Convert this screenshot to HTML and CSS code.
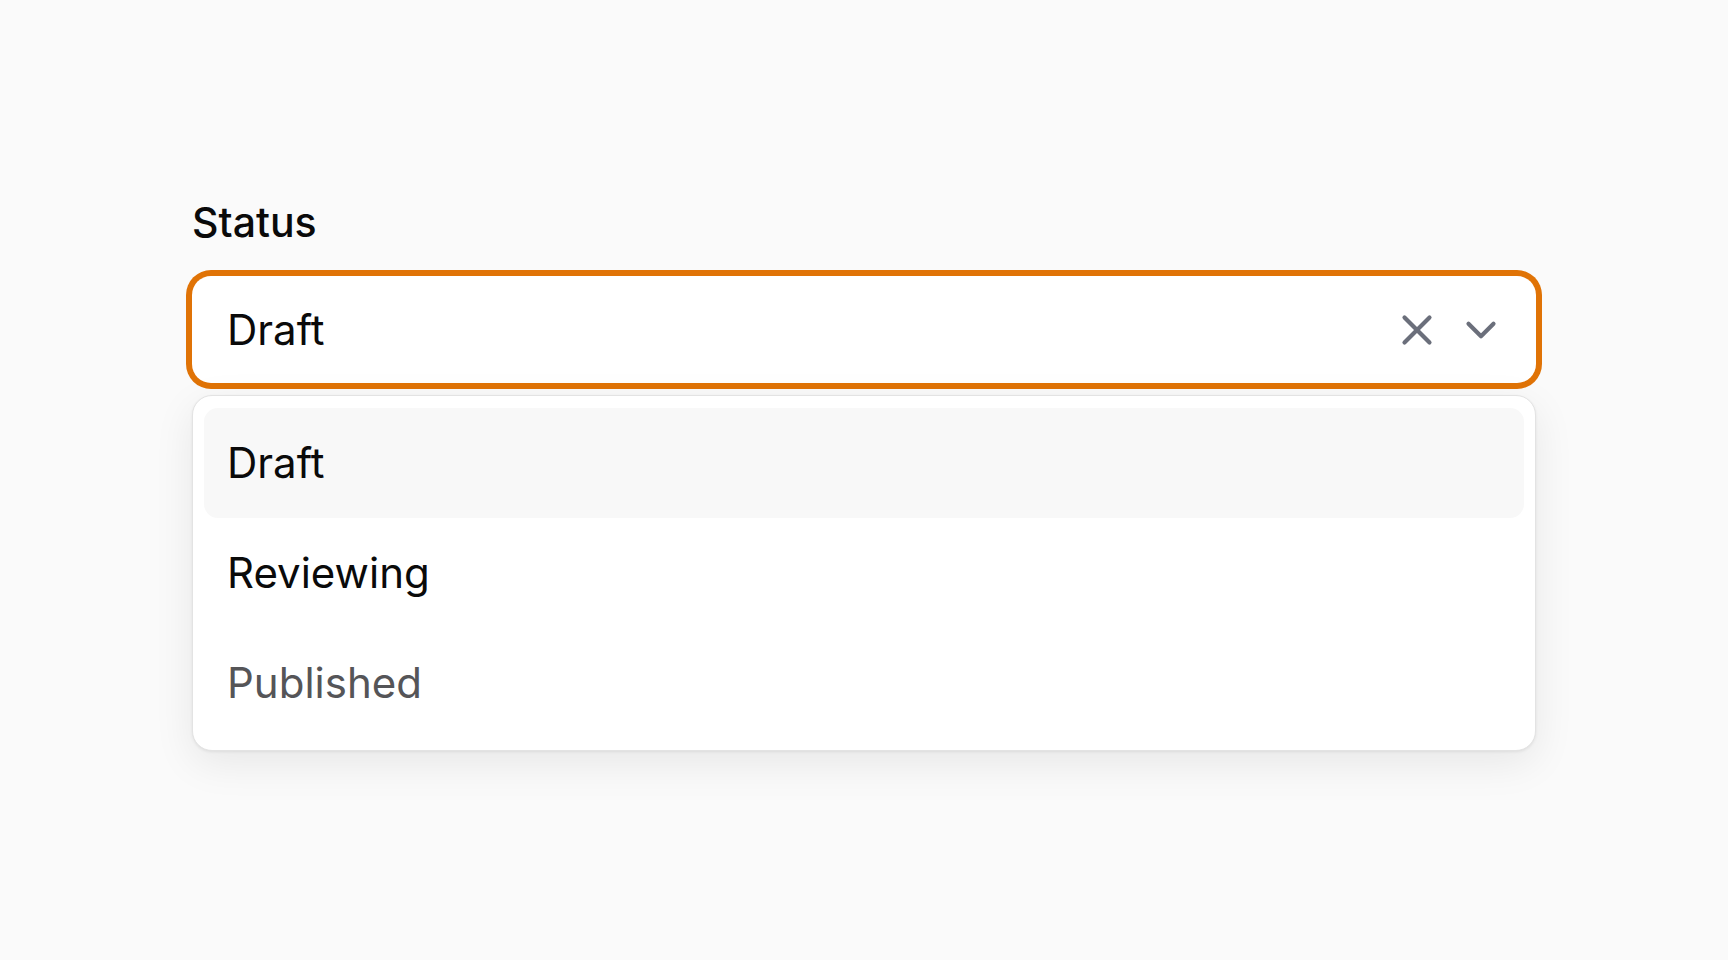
FILE: index.html
```html
<!DOCTYPE html>
<html lang="en">
<head>
<meta charset="utf-8">
<title>Status select</title>
<link rel="stylesheet" href="styles.css">
</head>
<body>
<main class="page">
  <div class="field">
    <label class="label">Status</label>
    <div class="select">
      <span class="value">Draft</span>
      <div class="actions">
        <svg class="icon" viewBox="0 0 24 24" fill="none" stroke="currentColor" stroke-width="2" stroke-linecap="round" stroke-linejoin="round"><path d="M18 6 6 18"/><path d="m6 6 12 12"/></svg>
        <svg class="icon" viewBox="0 0 24 24" fill="none" stroke="currentColor" stroke-width="2" stroke-linecap="round" stroke-linejoin="round"><path d="m6 9 6 6 6-6"/></svg>
      </div>
    </div>
    <ul class="menu">
      <li class="option active">Draft</li>
      <li class="option">Reviewing</li>
      <li class="option muted">Published</li>
    </ul>
  </div>
</main>
</body>
</html>
```

FILE: styles.css
```css
* { box-sizing: border-box; }
html, body {
  margin: 0;
  padding: 0;
  background: #fafafa;
  font-family: Inter, "Noto Sans", "Liberation Sans", sans-serif;
  color: #0a0a0a;
}
.page {
  display: flex;
  justify-content: center;
  padding-top: 198px;
  min-height: 960px;
}
.field {
  width: 1344px;
  display: flex;
  flex-direction: column;
}
.label {
  font-size: 41px;
  line-height: 48px;
  font-weight: 500;
  color: #0a0a0a;
  margin-bottom: 30px;
}
.select {
  height: 107px;
  background: #ffffff;
  border-radius: 19px;
  box-shadow: 0 0 0 6px #e07306;
  display: flex;
  align-items: center;
  justify-content: space-between;
  padding: 0 30px 0 35px;
}
.value {
  font-size: 42px;
  line-height: 50px;
}
.actions {
  display: flex;
  align-items: center;
  gap: 14px;
  color: #6b6f7b;
}
.icon {
  width: 50px;
  height: 50px;
  display: block;
}
.menu {
  list-style: none;
  margin: 12px 0 0;
  padding: 12px 11px;
  background: #ffffff;
  border: 1px solid #e3e3e3;
  border-radius: 20px;
  box-shadow: 0 12px 40px rgba(0, 0, 0, 0.08), 0 1px 3px rgba(0, 0, 0, 0.07);
}
.option {
  height: 110px;
  display: flex;
  align-items: center;
  padding-left: 23px;
  font-size: 42px;
  line-height: 50px;
  border-radius: 14px;
  color: #0a0a0a;
}
.option.active {
  background: #f8f8f8;
}
.option.muted {
  color: #555558;
}
```
